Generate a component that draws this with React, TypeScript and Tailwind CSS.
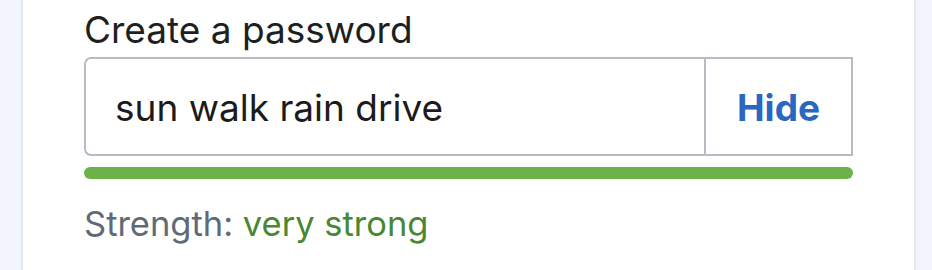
import { useState } from "react";

export default function App() {
  const [value, setValue] = useState("sun walk rain drive");
  const [shown, setShown] = useState(true);

  return (
    <div className="flex min-h-[270px] bg-[#f2f5fd] pl-[21px] pr-[16px] font-['Inter',sans-serif]">
      <div className="flex-1 border-x-2 border-[#e4e8f0] bg-white px-[61px] pt-[8px]">
        <label className="block text-[37px] leading-[44px] text-[#1d1f22]">
          Create a password
        </label>

        <div className="mt-[5px] flex h-[99px]">
          <input
            type={shown ? "text" : "password"}
            value={value}
            onChange={(e) => setValue(e.target.value)}
            className="min-w-0 flex-1 rounded-l-[7px] border-2 border-r-0 border-[#b6bbc4] bg-white pl-[29px] pt-[2px] text-[37px] text-[#1b1b1b] outline-none"
          />
          <button
            onClick={() => setShown(!shown)}
            className="w-[149px] border-2 border-[#b6bbc4] bg-white pt-[2px] text-[37px] font-bold text-[#2a67bf]"
          >
            {shown ? "Hide" : "Show"}
          </button>
        </div>

        <div className="mt-[11px] h-[12px] rounded-full bg-[#6cb14a]" />

        <p className="mt-[25px] text-[34.5px] leading-[40px] text-[#5e6a78]">
          Strength: <span className="text-[#4a8734]">very strong</span>
        </p>
      </div>
    </div>
  );
}
